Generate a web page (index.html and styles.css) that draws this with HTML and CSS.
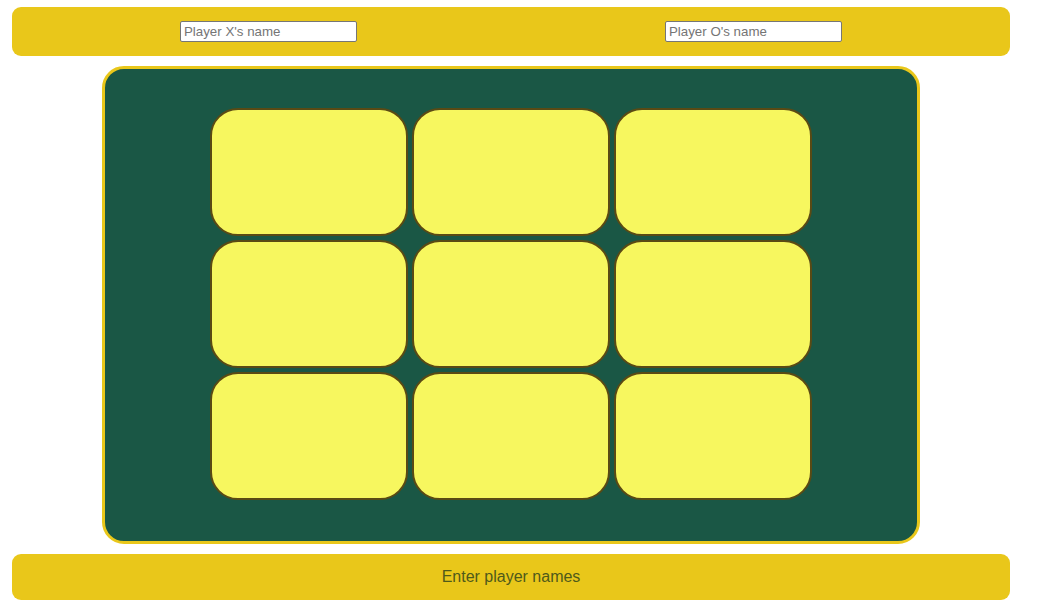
FILE: index.html
```html
<!DOCTYPE html>
<html>
<head>
<meta charset="utf-8">
<link rel="stylesheet" href="styles.css">
</head>
<body>
<div class="page">
  <header class="names">
    <input class="name-input" type="text" placeholder="Player X's name">
    <input class="name-input" type="text" placeholder="Player O's name">
  </header>
  <main class="board">
    <div class="grid">
      <div class="cell"></div><div class="cell"></div><div class="cell"></div>
      <div class="cell"></div><div class="cell"></div><div class="cell"></div>
      <div class="cell"></div><div class="cell"></div><div class="cell"></div>
    </div>
  </main>
  <footer class="status">Enter player names</footer>
</div>
</body>
</html>
```
FILE: styles.css
```css
html, body {
  margin: 0;
  padding: 0;
  background: #ffffff;
  font-family: "Liberation Sans", Arial, sans-serif;
}
.page {
  width: 998px;
  padding: 7px 0 0 12px;
  display: flex;
  flex-direction: column;
  align-items: center;
}
.names {
  box-sizing: border-box;
  width: 998px;
  height: 49px;
  background: #e9c71a;
  border-radius: 9px;
  display: flex;
  justify-content: center;
  align-items: center;
  gap: 308px;
}
.name-input {
  box-sizing: border-box;
  width: 177px;
  height: 21px;
  margin: 0;
  padding: 1px 3px;
  border: 1px solid #767676;
  border-radius: 2px;
  background: #fff;
  font-family: "Liberation Sans", Arial, sans-serif;
  font-size: 13.3px;
  color: #000;
}
.name-input::placeholder {
  color: #757575;
}
.board {
  box-sizing: border-box;
  width: 818px;
  height: 478px;
  margin-top: 10px;
  background: #1a5745;
  border: 3px solid #e9c71a;
  border-radius: 22px;
  display: flex;
  justify-content: center;
  padding-top: 39px;
}
.grid {
  display: grid;
  grid-template-columns: repeat(3, 198px);
  grid-template-rows: repeat(3, 128px);
  gap: 4px;
  align-content: start;
}
.cell {
  box-sizing: border-box;
  background: #f7f75f;
  border: 2px solid #5a4a14;
  border-radius: 28px;
}
.status {
  box-sizing: border-box;
  width: 998px;
  height: 46px;
  margin-top: 10px;
  background: #e9c71a;
  border-radius: 9px;
  display: flex;
  justify-content: center;
  align-items: center;
  font-size: 16px;
  color: #4f5a1a;
}
```
